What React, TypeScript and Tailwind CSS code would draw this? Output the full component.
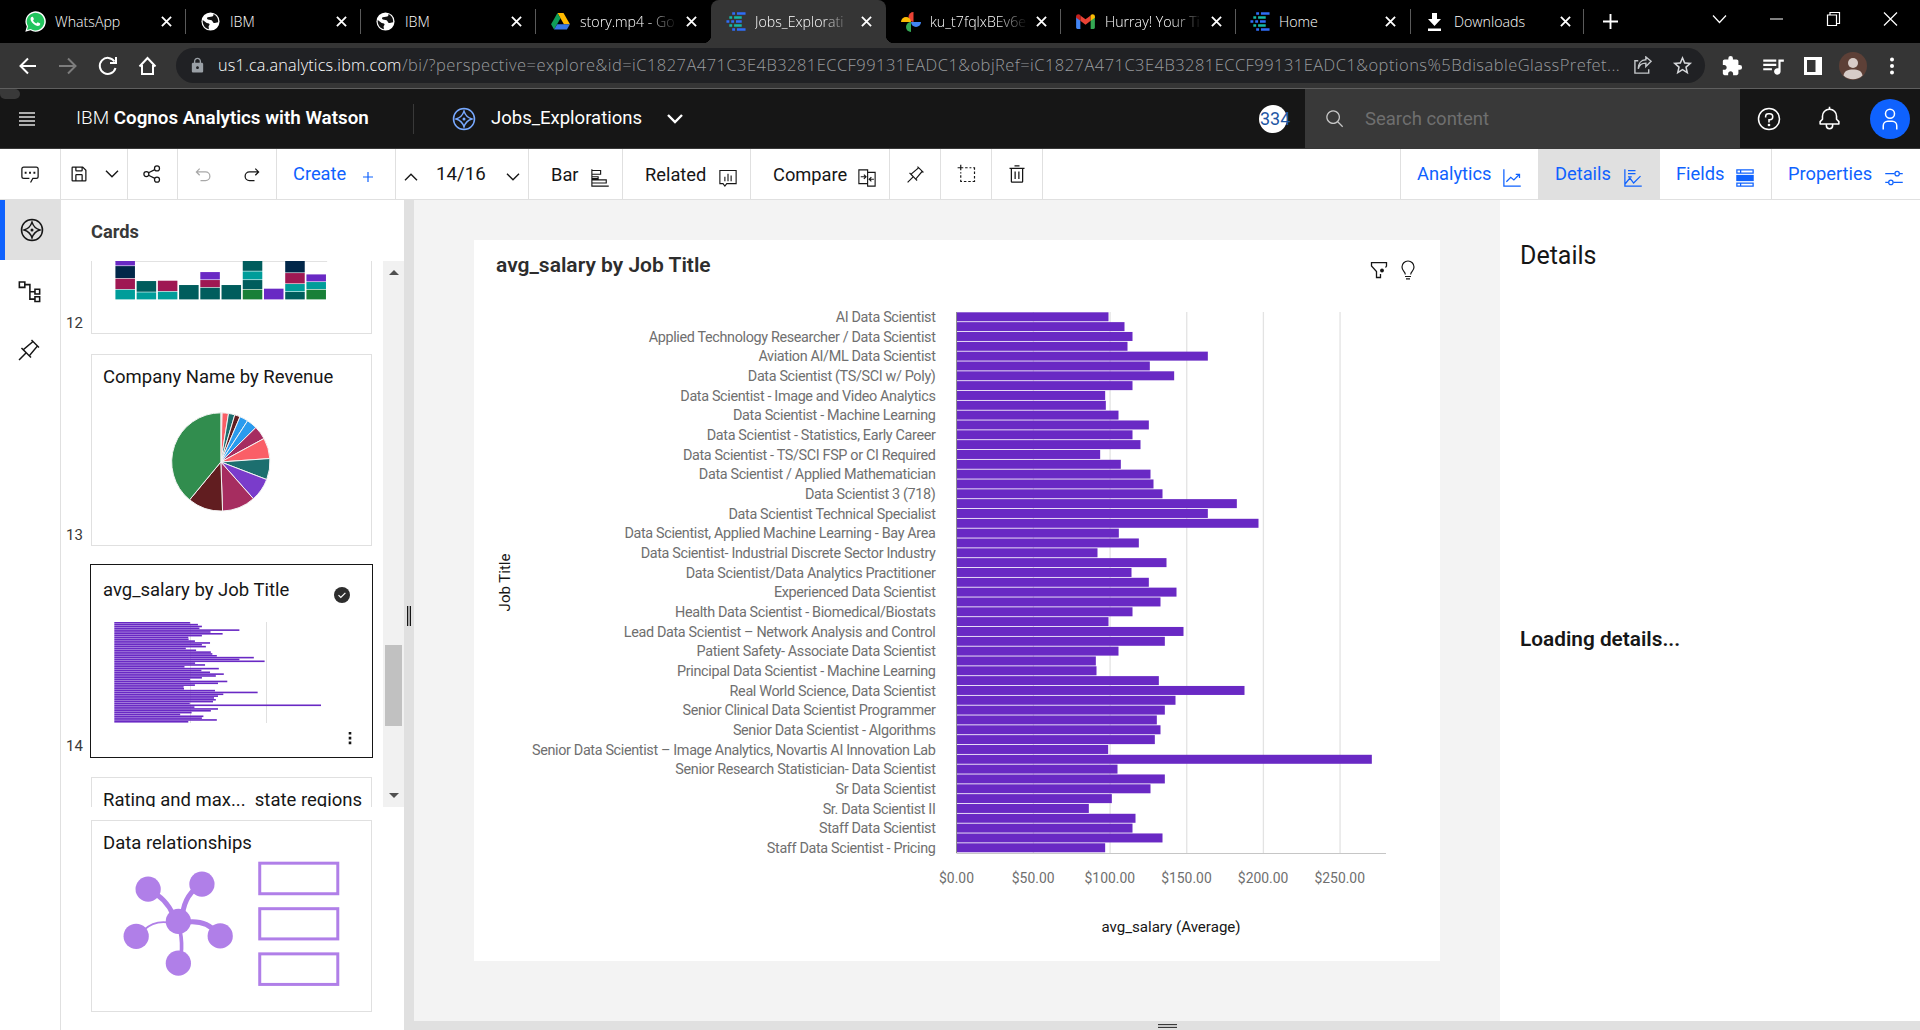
import React from 'react';
import { MdExtension, MdLock, MdQueueMusic, MdStarOutline } from 'react-icons/md';

type IconProps = { className?: string; children: React.ReactNode };

/** Outline icon on a 32-unit grid. */
function Line({ className = '', children }: IconProps) {
  return (
    <svg viewBox="0 0 32 32" fill="none" stroke="currentColor" strokeWidth="2" className={`shrink-0 ${className}`}>
      {children}
    </svg>
  );
}

/** Filled icon on a 32-unit grid. */
function Solid({ className = '', d }: { className?: string; d: string }) {
  return (
    <svg viewBox="0 0 32 32" fill="currentColor" className={`shrink-0 ${className}`}>
      <path d={d} />
    </svg>
  );
}

const PIN =
  'M28.59 13.31 30 11.9 20 2l-1.31 1.42 1.18 1.18-11.49 9.72-1.72-1.71L5.25 14l5.66 5.68L2 28.58 3.41 30l8.91-8.91L18 26.75l1.39-1.42-1.71-1.71 9.72-11.49ZM16.26 22.2 9.8 15.74 21.29 6 26 10.71Z';
const TRASH =
  'M12 12h2v12h-2zM18 12h2v12h-2zM4 6v2h2v20a2 2 0 0 0 2 2h16a2 2 0 0 0 2-2V8h2V6zm4 22V8h16v20zM12 2h8v2h-8z';
const SAVE =
  'm27.71 9.29-5-5A1 1 0 0 0 22 4H6a2 2 0 0 0-2 2v20a2 2 0 0 0 2 2h20a2 2 0 0 0 2-2V10a1 1 0 0 0-.29-.71M12 6h8v4h-8Zm8 20h-8v-8h8Zm2 0v-8a2 2 0 0 0-2-2h-8a2 2 0 0 0-2 2v8H6V6h4v4a2 2 0 0 0 2 2h8a2 2 0 0 0 2-2V6.41l4 4V26Z';
const UNDO =
  'M20 10H7.815l3.587-3.586L10 5 4 11l6 6 1.402-1.415L7.818 12H20a6 6 0 0 1 0 12h-8v2h8a8 8 0 0 0 0-16Z';
const REDO =
  'M12 10h12.185l-3.587-3.586L22 5l6 6-6 6-1.402-1.415L24.182 12H12a6 6 0 0 0 0 12h8v2h-8a8 8 0 0 1 0-16Z';
const CHAT =
  'M17.74 30 16 29l4-7h6a2 2 0 0 0 2-2V8a2 2 0 0 0-2-2H6a2 2 0 0 0-2 2v12a2 2 0 0 0 2 2h9v2H6a4 4 0 0 1-4-4V8a4 4 0 0 1 4-4h20a4 4 0 0 1 4 4v12a4 4 0 0 1-4 4h-4.84ZM7.5 12.5h3v3h-3zM14.5 12.5h3v3h-3zM21.5 12.5h3v3h-3z';
const BELL =
  'M28.7 19.3 26 16.6V13a10 10 0 0 0-9-9.9V1h-2v2.1A10 10 0 0 0 6 13v3.6l-2.7 2.7a1 1 0 0 0-.3.7v3a1 1 0 0 0 1 1h7v1a5 5 0 0 0 10 0v-1h7a1 1 0 0 0 1-1v-3a1 1 0 0 0-.3-.7ZM19 25a3 3 0 0 1-6 0v-1h6Zm8-3H5v-1.6l2.7-2.7A1 1 0 0 0 8 17v-4a8 8 0 0 1 16 0v4a1 1 0 0 0 .3.7l2.7 2.7Z';
const USER =
  'M16 4a5 5 0 1 1-5 5 5 5 0 0 1 5-5m0-2a7 7 0 1 0 7 7 7 7 0 0 0-7-7ZM26 30h-2v-5a5 5 0 0 0-5-5h-6a5 5 0 0 0-5 5v5H6v-5a7 7 0 0 1 7-7h6a7 7 0 0 1 7 7Z';
const SEARCH =
  'm29 27.586-7.552-7.552a11.018 11.018 0 1 0-1.414 1.414L27.586 29ZM4 13a9 9 0 1 1 9 9 9.01 9.01 0 0 1-9-9Z';

function Compass({ className = '' }: { className?: string }) {
  return (
    <Line className={className}>
      <circle cx="16" cy="16" r="14" />
      <path d="M16 5.5Q18.5 13.5 26.5 16Q18.5 18.5 16 26.5Q13.500 18.5 5.500 16Q13.500 13.500 16 5.500Z" />
      <circle cx="16" cy="16" r="1" fill="currentColor" />
    </Line>
  );
}

/* ---------- browser chrome ---------- */

function WhatsAppIcon() {
  return (
    <svg viewBox="0 0 20 20" className="h-[21px] w-[21px]">
      <path d="M.3 19.800 1.700 14.800A9.700 9.700 0 1 1 5.300 18.400Z" fill="#fff" />
      <path d="M1.900 18.200 2.900 14.600A8.400 8.400 0 1 1 5.500 17.200Z" fill="#22c55e" />
      <path
        d="M6.800 5.400c-.5 0-1.500.8-1.500 2.200 0 1.500 1 3 2.400 4.400 1.500 1.400 3.100 2.200 4.500 2.200 1.300 0 2.200-.9 2.300-1.900 0-.4-.1-.5-2.300-1.500-.4-.1-1 1.100-1.400 1.100-.6 0-3.100-2.100-3.100-2.800 0-.3.9-1 .8-1.400-.9-2.200-.9-2.300-1.700-2.300Z"
        fill="#fff"
      />
    </svg>
  );
}

function GlobeIcon() {
  return (
    <svg viewBox="0 0 20 20" className="h-[19px] w-[19px]">
      <circle cx="10" cy="10" r="9.500" fill="#fff" />
      <path d="M1.800 8.500 6 11.500c2 .3 3.200.6 3 2l-1 1.500.3 3.200C4 17.500 1.300 13 1.800 8.500ZM7 5.500c-1.500 1-.5 2.500 1.500 2.700 2.300.2 3.400.6 4 2.300.5 1.200 1.800 1.200 3 .8l2.600-.5C18.300 6.500 16 3.300 13 2.200c.6 1.600-.5 2.800-2.500 2.800Z" fill="#111" />
    </svg>
  );
}

function DriveIcon() {
  return (
    <svg viewBox="0 0 20 18" className="h-[17px] w-[19px]">
      <path d="M6.800 0h6.400l6.800 11.800h-6.400Z" fill="#ffba00" />
      <path d="M6.800 0 10 5.600 3.200 17.500 0 11.900Z" fill="#0f9d58" />
      <path d="M6.500 11.900H20l-3.200 5.600H3.200Z" fill="#3777e3" />
    </svg>
  );
}

function CognosIcon() {
  return (
    <svg viewBox="0 0 20 22" className="h-[21px] w-[20px]" strokeWidth="2.600">
      <g stroke="#2f6df6">
        <path d="M6 2.500h3M11 2.500h9M0 11h3M5 11h3M10 11h6M6 19.500h3M11 19.500h9" />
      </g>
      <g stroke="#14b8a6">
        <path d="M3 6.800h3M8 6.800h8M3 15.200h3M8 15.200h8" />
      </g>
    </svg>
  );
}

function PhotosIcon() {
  return (
    <svg viewBox="0 0 20 22" className="h-[22px] w-[20px]">
      <path d="M10 11V1a5 5 0 0 0 0 10Z" fill="#ea4335" transform="translate(2.500 0)" />
      <path d="M10 11V1a5 5 0 0 1 0 10Z" fill="#4285f4" transform="rotate(90 10 11)" />
      <path d="M10 11V1a5 5 0 0 1 0 10Z" fill="#34a853" transform="rotate(180 10 11)" />
      <path d="M10 11V1a5 5 0 0 1 0 10Z" fill="#fbbc04" transform="rotate(270 10 11)" />
    </svg>
  );
}

function GmailIcon() {
  return (
    <svg viewBox="0 0 20 16" className="h-[15px] w-[19px]">
      <path d="M0 3v11.500C0 15.300.6 16 1.400 16h3.100V6Z" fill="#4285f4" />
      <path d="M20 3v11.500c0 .8-.6 1.500-1.400 1.500h-3.100V6Z" fill="#34a853" />
      <path d="M4.500 1.500 10 5.700l5.500-4.200v5.800L10 11.500 4.500 7.300Z" fill="#ea4335" />
      <path d="M0 2.500C0 .3 2.500-.6 4.500 1v6.300L0 4Z" fill="#c5221f" />
      <path d="M20 2.500c0-2.200-2.500-3.100-4.500-1.500v6.300L20 4Z" fill="#fbbc04" />
    </svg>
  );
}

function DownloadIcon() {
  return (
    <svg viewBox="0 0 13 18" className="h-[18px] w-[13px]" fill="#fff">
      <path d="M4 0h5v6h4l-6.500 7L0 6h4ZM0 15.500h13V18H0Z" />
    </svg>
  );
}

function Cross() {
  return (
    <svg viewBox="0 0 12 12" className="h-[11px] w-[11px] shrink-0" stroke="#fff" strokeWidth="2">
      <path d="M1 1l10 10M11 1L1 11" />
    </svg>
  );
}

const TABS = [
  { icon: <WhatsAppIcon />, title: 'WhatsApp', sep: true },
  { icon: <GlobeIcon />, title: 'IBM', sep: true },
  { icon: <GlobeIcon />, title: 'IBM', sep: true },
  { icon: <DriveIcon />, title: 'story.mp4 - Go', fade: true },
  { icon: <CognosIcon />, title: 'Jobs_Explorati', fade: true, active: true },
  { icon: <PhotosIcon />, title: 'ku_t7fqlxBEv6e', fade: true, sep: true },
  { icon: <GmailIcon />, title: 'Hurray! Your Ti', fade: true, sep: true },
  { icon: <CognosIcon />, title: 'Home', sep: true },
  { icon: <DownloadIcon />, title: 'Downloads', sep: true },
];

function TabStrip() {
  return (
    <div className="flex h-[43px] bg-black pl-[11px] font-['Open_Sans',sans-serif] text-[14.2px] text-white">
      {TABS.map((t, i) => (
        <div
          key={i}
          className={`relative flex shrink-0 items-center pl-[14px] ${i > 7 ? 'w-[173px]' : 'w-[175px]'} ${
            t.active ? 'rounded-t-lg bg-[#353535]' : ''
          }`}
        >
          {t.active && (
            <>
              <span className="absolute -left-2 bottom-0 size-2 bg-[radial-gradient(circle_at_0_0,black_8px,#353535_8.500px)]" />
              <span className="absolute -right-2 bottom-0 size-2 bg-[radial-gradient(circle_at_100%_0,black_8px,#353535_8.500px)]" />
            </>
          )}
          <span className={`flex w-[21px] justify-center ${i > 6 ? '-ml-px' : ''}`}>{t.icon}</span>
          <span
            className={`ml-[9px] w-[104px] whitespace-nowrap font-light ${
              t.fade ? '[mask-image:linear-gradient(to_right,black_64%,transparent_94%)]' : ''
            }`}
          >
            {t.title}
          </span>
          <span className="ml-[2px]">
            <Cross />
          </span>
          {t.sep && <span className="absolute right-0 top-[9px] h-[25px] w-px bg-[#5a5a5a]" />}
        </div>
      ))}
      <div className="flex w-[53px] items-center justify-center">
        <svg viewBox="0 0 16 16" className="h-[15px] w-[15px]" stroke="#fff" strokeWidth="2">
          <path d="M8 0v16M0 8h16" />
        </svg>
      </div>
      <div className="ml-auto flex h-[37px] items-center pr-[22px]">
        <svg viewBox="0 0 186 16" className="h-4 w-[186px]" fill="none" stroke="#fff" strokeWidth="1.200">
          <path d="M1 4.500l6.500 7L14 4.500M58 8h13M172 1.500l13 13M185 1.500l-13 13" />
          <path d="M115.500 4h9v10.500h-9zM118 4V1.500h9.500v11H124.500" />
        </svg>
      </div>
    </div>
  );
}

function AddressBar() {
  return (
    <div className="flex h-[46px] items-center border-b border-[#5f5f5f] bg-[#353535] font-['Open_Sans',sans-serif] text-white">
      <svg viewBox="0 0 176 30" className="h-[30px] w-[176px] shrink-0" fill="none" stroke="#fff" strokeWidth="2">
        <path d="M36 15H21M28 7.500 20.500 15l7.500 7.500" />
        <path d="M59 15h15M68 7.500l7.500 7.500-7.500 7.500" stroke="#7d7d7d" />
        <path d="M114.500 10.500A8 8 0 1 0 115.500 17M116 6v6h-6" />
        <path d="M142 14v9h11v-9M139.500 15.500l8-8.500 8 8.500" />
      </svg>
      <div className="flex h-[35px] w-[1529px] items-center rounded-full bg-[#202124] pl-[13px] font-light">
        <MdLock className="size-[17px] shrink-0 text-[#9aa0a6]" />
        <span className="ml-[12px] w-[184px] shrink-0 whitespace-nowrap text-[16.200px] tracking-[0.180px]">us1.ca.analytics.ibm.com</span>
        <span className="w-[1216px] shrink-0 whitespace-nowrap text-[16.500px] tracking-[0.450px] text-[#9a9c9f]">
          /bi/?perspective=explore&amp;id=iC1827A471C3E4B3281ECCF99131EADC1&amp;objRef=iC1827A471C3E4B3281ECCF99131EADC1&amp;options%5BdisableGlassPrefet...
        </span>
        <svg viewBox="0 0 20 20" className="ml-[15px] h-[19px] w-[20px] shrink-0" fill="none" stroke="#c4c7ca" strokeWidth="1.500">
          <path d="M5 5H1.500v13H16v-4M5 13.500C6 9 9 7.500 13 7.500V11l5.500-5.500L13 1v3C8 4 5 8 5 13.500Z" />
        </svg>
        <MdStarOutline className="ml-[18px] size-[23px] text-[#d5d7da]" />
      </div>
      <div className="flex flex-1 items-center justify-between pl-[16px] pr-[20px]">
        <MdExtension className="size-[22px]" />
        <MdQueueMusic className="size-[26px]" />
        <svg viewBox="0 0 18 18" className="size-[18px]" fill="none" stroke="#fff">
          <path d="M1.500 1.500h15v15h-15z" strokeWidth="3" />
          <path d="M14 2v14" strokeWidth="5" />
        </svg>
        <svg viewBox="0 0 28 28" className="size-[28px]">
          <circle cx="14" cy="14" r="14" fill="#5d4037" />
          <circle cx="14" cy="11" r="5" fill="#d7ccc8" />
          <path d="M4.500 23.500C5 19 9 17.500 14 17.500s9 1.500 9.500 6a14 14 0 0 1-19 0Z" fill="#d7ccc8" />
        </svg>
        <svg viewBox="0 0 16 18" className="h-[18px] w-4" fill="#fff">
          <circle cx="8" cy="2.500" r="2" />
          <circle cx="8" cy="9" r="2" />
          <circle cx="8" cy="15.500" r="2" />
        </svg>
      </div>
    </div>
  );
}

/* ---------- application header and toolbar ---------- */

function AppHeader() {
  return (
    <header className="relative flex h-[60px] items-center border-b border-[#393939] bg-[#161616] text-[18.500px] text-white">
      <span className="absolute left-0 top-0 h-[10px] w-[20px] rounded-md rounded-tl-none bg-[#393939]" />
      <svg viewBox="0 0 16 14" className="ml-[19px] h-[14px] w-4 shrink-0" stroke="#e0e0e0" strokeWidth="1.300">
        <path d="M0 1h16M0 5h16M0 9h16M0 13h16" />
      </svg>
      <div className="ml-[41px] w-[337px] whitespace-nowrap">
        <span className="text-[19px] font-light">IBM</span>{' '}
        <span className="text-[18.800px] font-semibold">Cognos Analytics with Watson</span>
      </div>
      <span className="h-[30px] w-px bg-[#393939]" />
      <Compass className="ml-[38px] size-[24px] text-[#78a9ff]" />
      <span className="ml-[15px] w-[152px]">Jobs_Explorations</span>
      <svg viewBox="0 0 16 10" className="ml-[24px] h-[10px] w-4" fill="none" stroke="#fff" strokeWidth="2.400">
        <path d="M1 1l7 7 7-7" />
      </svg>
      <div className="ml-auto flex h-full items-center">
        <span className="mr-[18px] flex size-[28px] items-center rounded-full bg-white text-[18px] text-[#1f57a4]">
          <span className="ml-[1px]">334</span>
        </span>
        <div className="flex h-full w-[435px] items-center bg-[#393939] pl-[20px] text-[#6f6f6f]">
          <Solid d={SEARCH} className="size-[20px] text-[#c6c6c6]" />
          <span className="ml-5 pt-0.5">Search content</span>
        </div>
        <Line className="ml-[17px] size-[24px]">
          <circle cx="16" cy="16" r="14" />
          <path d="M11.500 14v-1.500A3.500 3.500 0 0 1 15 9h2a4 4 0 0 1 0 8h-1v3.500" />
          <circle cx="16" cy="24" r=".8" fill="currentColor" />
        </Line>
        <Solid d={BELL} className="ml-[36px] size-[25px]" />
        <span className="ml-[28px] mr-[10px] flex size-[40px] items-center justify-center rounded-full bg-[#0f62fe]">
          <Solid d={USER} className="size-[24px]" />
        </span>
      </div>
    </header>
  );
}

function Cell({ className, children }: { className: string; children: React.ReactNode }) {
  return <div className={`flex h-full shrink-0 items-center border-r border-[#e0e0e0] ${className}`}>{children}</div>;
}

const Chevron = ({ className = '', up = false }: { className?: string; up?: boolean }) => (
  <svg viewBox="0 0 14 8" className={`h-[8px] w-[14px] shrink-0 ${className}`} fill="none" stroke="currentColor" strokeWidth="1.400">
    <path d={up ? 'M1 7.200l6-6 6 6' : 'M1 .800l6 6 6-6'} />
  </svg>
);

function Toolbar() {
  return (
    <div className="flex h-[51px] items-center border-b border-[#e0e0e0] bg-white text-[18.300px] text-[#161616]">
      <Cell className="w-[61px] justify-center">
        <Solid d={CHAT} className="size-[20px]" />
      </Cell>
      <Cell className="w-[67px] justify-between pl-[8px] pr-[8px]">
        <Solid d={SAVE} className="size-[20px]" />
        <Chevron />
      </Cell>
      <Cell className="w-[50px] justify-center pr-px">
        <Line className="size-[20px]">
          <circle cx="24" cy="7" r="4" />
          <circle cx="7" cy="16" r="4" />
          <circle cx="24" cy="25" r="4" />
          <path d="M10.500 14 20.500 9M10.500 18l10 5" />
        </Line>
      </Cell>
      <Cell className="w-[99px] justify-between pl-[15px] pr-[14px] pt-0.5">
        <Solid d={UNDO} className="size-[20px] text-[#a8a8a8]" />
        <Solid d={REDO} className="size-[20px]" />
      </Cell>
      <Cell className="w-[119px] pl-[16px] text-[#0f62fe]">
        <span>Create</span>
        <svg viewBox="0 0 10 10" className="ml-[17px] mt-[6px] size-[10px]" stroke="currentColor" strokeWidth="1.200">
          <path d="M5 0v10M0 5h10" />
        </svg>
      </Cell>
      <Cell className="w-[133px] pl-[8px]">
        <Chevron up className="mt-[6px]" />
        <span className="ml-[18px] text-[18.700px]">14/16</span>
        <Chevron className="ml-[20px] mt-[6px]" />
      </Cell>
      <Cell className="w-[94px] pl-[22px] pt-0.5">
        <span>Bar</span>
        <Line className="ml-[11px] mt-[5px] size-[20px]">
          <path d="M3 2v27h27M3 4h14v6H3M3 14h10v3H3M3 19h23v5H3" strokeWidth="1.800" />
        </Line>
      </Cell>
      <Cell className="w-[128px] pl-[22px] pt-0.5">
        <span>Related</span>
        <Line className="ml-[12px] mt-[5px] size-[20px]">
          <path d="M3 4h26v21H14l-3 4-3-4H3zM11 21v-7M16 21V9M21 21v-9" strokeWidth="1.800" />
        </Line>
      </Cell>
      <Cell className="w-[139px] pl-[22px] pt-0.5">
        <span>Compare</span>
        <Line className="ml-[10px] mt-[5px] size-[20px]">
          <path d="M17 25H3V3h14v26h12V7H17M6 14h8M11 10.500l3.500 3.500-3.500 3.500M27 18h-7M23 14.500 19.500 18l3.500 3.500" strokeWidth="1.800" />
        </Line>
      </Cell>
      <Cell className="w-[51px] justify-center">
        <Solid d={PIN} className="size-[19px]" />
      </Cell>
      <Cell className="w-[51px] justify-center pl-px">
        <Line className="size-[20px]">
          <path d="M6 1v9M1 6h9M13 6h4M20 6h3M26 6h2v3M28 12v4M28 19v4M28 26v2h-3M22 28h-4M15 28h-4M8 28H6v-3M6 22v-4M6 15v-2" strokeWidth="1.900" />
        </Line>
      </Cell>
      <Cell className="w-[51px] justify-center">
        <Solid d={TRASH} className="size-[20px]" />
      </Cell>
      <div className="ml-auto flex h-full text-[#0f62fe]">
        <div className="flex w-[138px] items-center border-l border-[#e0e0e0] pl-[16px]">
          <span className="w-[75px]">Analytics</span>
          <Line className="ml-[10px] mt-[7px] size-[20px]">
            <path d="M3 2v27h27M7 22l7-7 5 4 9-9M22 10h6v6" />
          </Line>
        </div>
        <div className="flex w-[122px] items-center bg-[#e0e0e0] pl-[17px]">
          <span className="w-[58px]">Details</span>
          <Line className="ml-[10px] mt-[7px] size-[20px]">
            <path d="M3 2v27h27M3 26l8-10 6 8 11-11M8 4h12M8 9h12M8 14h6" />
          </Line>
        </div>
        <div className="flex w-[112px] items-center border-r border-[#e0e0e0] pl-[16px]">
          <span className="w-[49px]">Fields</span>
          <Line className="ml-[10px] mt-[7px] size-[20px]">
            <path d="M3 3h26v5H3zM3 24h26v5H3zM9 3v5M9 24v5" />
            <path d="M2 11h28v10H2z" fill="currentColor" stroke="none" />
          </Line>
        </div>
        <div className="flex w-[148px] items-center pl-[16px]">
          <span className="w-[86px]">Properties</span>
          <Line className="ml-[10px] mt-[7px] size-[20px]">
            <circle cx="21" cy="9" r="3.500" />
            <circle cx="11" cy="23" r="3.500" />
            <path d="M2 9h15M25 9h5M2 23h5M15 23h15" />
          </Line>
        </div>
      </div>
    </div>
  );
}

/* ---------- data ---------- */

/* Average salary in chart units, one entry for each job title. */
const SALARY = [
  456, 504, 528, 513, 754, 580, 653, 528, 446, 448, 486, 577, 528, 552, 431, 493, 582, 591, 618, 841, 754, 906, 487, 547,
  423, 630, 525, 577, 660, 612, 528, 456, 681, 625, 486, 418, 420, 607, 864, 657, 625, 601, 612, 595, 455, 1246, 483,
  625, 582, 466, 397, 537, 528, 618, 446,
];

const JOBS = [
  'AI Data Scientist',
  'Applied Technology Researcher / Data Scientist',
  'Aviation AI/ML Data Scientist',
  'Data Scientist (TS/SCI w/ Poly)',
  'Data Scientist - Image and Video Analytics',
  'Data Scientist - Machine Learning',
  'Data Scientist - Statistics, Early Career',
  'Data Scientist - TS/SCI FSP or CI Required',
  'Data Scientist / Applied Mathematician',
  'Data Scientist 3 (718)',
  'Data Scientist Technical Specialist',
  'Data Scientist, Applied Machine Learning - Bay Area',
  'Data Scientist- Industrial Discrete Sector Industry',
  'Data Scientist/Data Analytics Practitioner',
  'Experienced Data Scientist',
  'Health Data Scientist - Biomedical/Biostats',
  'Lead Data Scientist – Network Analysis and Control',
  'Patient Safety- Associate Data Scientist',
  'Principal Data Scientist - Machine Learning',
  'Real World Science, Data Scientist',
  'Senior Clinical Data Scientist Programmer',
  'Senior Data Scientist - Algorithms',
  'Senior Data Scientist – Image Analytics, Novartis AI Innovation Lab',
  'Senior Research Statistician- Data Scientist',
  'Sr Data Scientist',
  'Sr. Data Scientist II',
  'Staff Data Scientist',
  'Staff Data Scientist - Pricing',
];

const G = '#198038';
const D = '#005d5d';
const T = '#009d9a';
const M = '#9f1853';
const N = '#012749';
const P = '#6929c4';

/* Each column lists its segments from the baseline upwards. */
const STACKS: [string, number][][] = [
  [[T, 31], [M, 33], [N, 38], [P, 30]],
  [[T, 23], [D, 34]],
  [[T, 25], [M, 33]],
  [[D, 45]],
  [[D, 37], [M, 23], [P, 24]],
  [[D, 45]],
  [[G, 31], [D, 29], [T, 26], [D, 50]],
  [[P, 34]],
  [[D, 24], [T, 24], [M, 33], [N, 40]],
  [[G, 31], [T, 23], [P, 23]],
];

const SLICES: [number, string][] = [
  [1.5, '#d3bdf0'],
  [9, '#fa5f67'],
  [16.5, '#1c6f6f'],
  [23, '#611d20'],
  [33, '#2a9bee'],
  [45.5, '#2a9bee'],
  [61.5, '#a62d60'],
  [86, '#fa5f67'],
  [111, '#1c6f6f'],
  [138.5, '#7a3ccb'],
  [178, '#a62d60'],
  [219.5, '#611d20'],
  [360, '#318d4e'],
];

/* ---------- cards panel ---------- */

function StackedColumns() {
  return (
    <svg viewBox="0 0 280 190" className="h-full w-full">
      <path d="M23 118.500h213" stroke="#e0e0e0" />
      {STACKS.map((col, i) => {
        let y = 157;
        return col.map(([fill, h], j) => {
          y -= h / 3;
          return <rect key={`${i}-${j}`} x={23.5 + 21.3 * i} y={y + 0.2} width="19.600" height={h / 3 - 0.6} fill={fill} />;
        });
      })}
    </svg>
  );
}

function Pie() {
  const cx = 129.3;
  const cy = 107;
  const r = 49.3;
  const at = (deg: number) => {
    const a = ((deg - 90) * Math.PI) / 180;
    return `${cx + r * Math.cos(a)} ${cy + r * Math.sin(a)}`;
  };
  return (
    <svg viewBox="0 0 280 190" className="h-full w-full">
      {SLICES.map(([end, fill], i) => {
        const start = i ? SLICES[i - 1][0] : 0;
        return (
          <path
            key={i}
            d={`M${cx} ${cy}L${at(start)}A${r} ${r} 0 ${end - start > 180 ? 1 : 0} 1 ${at(end)}Z`}
            fill={fill}
            stroke="#f4f4f4"
            strokeWidth="1"
          />
        );
      })}
    </svg>
  );
}

function MiniBars() {
  return (
    <svg viewBox="0 0 281 192" className="h-full w-full">
      <path d="M99.500 57v101M175.500 57v101" stroke="#e0e0e0" />
      {SALARY.map((v, i) => (
        <rect key={i} x="23.300" y={57 + i * 1.833} width={v * 0.1659} height="1.600" fill="#6929c4" />
      ))}
    </svg>
  );
}

function Relationships() {
  return (
    <svg viewBox="275 812 840 570" className="h-full w-full" fill="none" stroke="#b07fe8">
      <path d="M444 1016Q500 1045 520 1095M606 1000Q555 1030 548 1090M560 1115Q620 1108 650 1148" strokeWidth="15" />
      <path d="M540 1140Q548 1180 543 1215" strokeWidth="11" />
      <path d="M430 1140Q460 1112 500 1116" strokeWidth="5" />
      <g fill="#b07fe8" stroke="none">
        <circle cx="444" cy="1016" r="38" />
        <circle cx="606" cy="1001" r="38" />
        <circle cx="535" cy="1113" r="38" />
        <circle cx="408" cy="1158" r="38" />
        <circle cx="661" cy="1157" r="38" />
        <circle cx="535" cy="1239" r="38" />
      </g>
      <g strokeWidth="9">
        <rect x="780" y="938" width="235" height="92" />
        <rect x="780" y="1075" width="235" height="91" />
        <rect x="780" y="1211" width="235" height="92" />
      </g>
    </svg>
  );
}

function Card({ n, title, selected = false, children }: { n?: number; title: React.ReactNode; selected?: boolean; children?: React.ReactNode }) {
  return (
    <div className={`flex shrink-0 items-end pl-[5px] ${selected ? '-my-px' : ''}`}>
      <span className={`w-[25px] shrink-0 text-[15px] leading-5 text-[#393939] ${selected ? 'pb-[2px]' : 'pb-px'}`}>{n}</span>
      <div
        className={`relative ${
          selected ? 'h-[194px] w-[283px] -ml-px border border-[#161616]' : 'h-[192px] w-[281px] border border-[#e0e0e0]'
        }`}
      >
        <div className="h-full w-full">{children}</div>
        <div
          className={`absolute whitespace-pre text-[18.500px] leading-6 ${selected ? 'left-3 top-[13px]' : 'left-[11px] top-[10px]'}`}
        >
          {title}
        </div>
        {selected && (
          <>
            <svg viewBox="0 0 16 16" className="absolute right-[22px] top-[22px] size-4">
              <circle cx="8" cy="8" r="8" fill="#2d2d2d" />
              <path d="M4.500 8.200l2.300 2.300 4.600-4.700" fill="none" stroke="#fff" strokeWidth="1.200" />
            </svg>
            <svg viewBox="0 0 4 14" className="absolute bottom-[12px] right-[20px] h-[14px] w-1" fill="#161616">
              <path d="M.700 1h2.600v2.600H.700zM.700 5.800h2.600v2.600H.700zM.700 10.600h2.600v2.600H.700z" />
            </svg>
          </>
        )}
      </div>
    </div>
  );
}

function CardsPanel() {
  return (
    <section className="flex w-[343px] shrink-0 flex-col bg-white">
      <h2 className="flex h-[61px] shrink-0 items-center pl-[30px] pt-0.5 text-[18.300px] font-bold text-[#393939]">Cards</h2>
      <div className="flex h-[546px] shrink-0 justify-between overflow-hidden">
        <div className="-mt-[119px] flex flex-col gap-[19.600px]">
          <Card n={12} title="">
            <StackedColumns />
          </Card>
          <Card n={13} title="Company Name by Revenue">
            <Pie />
          </Card>
          <Card n={14} title="avg_salary by Job Title" selected>
            <MiniBars />
          </Card>
          <Card title={'Rating and max...  state regions'} />
        </div>
        <div className="flex w-[21px] flex-col items-center bg-[#f1f1f1] py-[9px]">
          <svg viewBox="0 0 10 5" className="h-[5px] w-[10px]" fill="#505050">
            <path d="M5 0l5 5H0z" />
          </svg>
          <span className="mt-[370px] h-[81px] w-[17px] bg-[#c1c1c1]" />
          <svg viewBox="0 0 10 5" className="mt-auto h-[5px] w-[10px]" fill="#505050">
            <path d="M5 5L0 0h10z" />
          </svg>
        </div>
      </div>
      <div className="mt-[13px]">
        <Card title="Data relationships">
          <Relationships />
        </Card>
      </div>
    </section>
  );
}

function SideRail() {
  return (
    <nav className="flex w-[61px] shrink-0 flex-col border-r border-[#e0e0e0] bg-white text-[#161616]">
      <div className="flex h-[60px] items-center justify-center border-l-[5px] border-[#0f62fe] bg-[#e0e0e0] pr-px">
        <Compass className="size-[24px]" />
      </div>
      <div className="flex h-[60px] items-center justify-center pr-px">
        <Line className="size-[25px]">
          <path d="M3 5h7v7H3zM23 14.500h6v6h-6zM23 24h6v6h-6zM10 8.500h6.500V27H23M16.500 17.500H23" strokeWidth="2" />
        </Line>
      </div>
      <div className="flex h-[60px] items-center justify-center pr-[2px]">
        <Solid d={PIN} className="size-[24px]" />
      </div>
    </nav>
  );
}

/* ---------- main chart ---------- */

function SalaryChart() {
  /* The user units equal page pixels inside the sheet. */
  const x0 = 482.5;
  const top = 72;
  const row = 9.833;
  return (
    <svg viewBox="0 0 966 721" className="h-[721px] w-[966px] font-['Roboto',sans-serif]">
      {[0, 1, 2, 3, 4, 5].map((k) => (
        <g key={k}>
          {k > 0 && <path d={`M${x0 + 76.65 * k + 0.3} ${top}v541`} stroke="#e3e3e3" strokeWidth="1.300" />}
          <text x={x0 + 76.65 * k} y="643" textAnchor="middle" fontSize="13.900" fill="#6f6f6f">
            {`$${k * 50}.00`}
          </text>
        </g>
      ))}
      {SALARY.map((v, i) => (
        <rect key={i} x={x0} y={top + i * row + 0.3} width={v / 3} height="9" fill="#6929c4" />
      ))}
      <path d={`M${x0} ${top}v541`} stroke="#8d8d8d" />
      <path d={`M${x0} 613.500h429.500`} stroke="#c6c6c6" />
      {JOBS.map((t, i) => (
        <text key={t} x="461.500" y={82 + i * row * 2} textAnchor="end" fontSize="14.400" letterSpacing="-0.350" fill="#6f6f6f">
          {t}
        </text>
      ))}
      <text x="697" y="692" textAnchor="middle" fontSize="15.100" fill="#161616">
        avg_salary (Average)
      </text>
      <text transform="translate(36 342.500) rotate(-90)" textAnchor="middle" fontSize="15" fill="#161616">
        Job Title
      </text>
    </svg>
  );
}

function Sheet() {
  return (
    <div className="relative h-[721px] w-[966px] bg-white">
      <SalaryChart />
      <div className="absolute inset-x-0 top-0 flex h-[52px] items-center justify-between pl-[22px] pr-[24px]">
        <h1 className="text-[21px] font-semibold text-[#2d2d2d]">avg_salary by Job Title</h1>
        <div className="flex items-center gap-[12px] pt-[8px] text-[#161616]">
          <svg viewBox="0 0 18 18" className="size-[18px]" fill="none" stroke="currentColor" strokeWidth="1.300">
            <path d="M15.500 6.500 16.500 5V1.600h-15V5l5 5.500V16.500h4V13" />
            <circle cx="12" cy="9.500" r="1.900" fill="currentColor" stroke="none" />
          </svg>
          <svg viewBox="0 0 16 20" className="h-[20px] w-4" fill="none" stroke="currentColor" strokeWidth="1.200">
            <path d="M5.300 14.500C5.300 11.500 2 11 2 7a6 6 0 0 1 12 0c0 4-3.300 4.500-3.300 7.500M5 16.500h6M6 18.800h4" />
          </svg>
        </div>
      </div>
    </div>
  );
}

export default function App() {
  return (
    <div className="flex h-[1030px] w-[1920px] flex-col overflow-hidden bg-white font-['Roboto',sans-serif] text-[#161616]">
      <TabStrip />
      <AddressBar />
      <AppHeader />
      <Toolbar />
      <div className="flex min-h-0 flex-1">
        <SideRail />
        <CardsPanel />
        <div className="flex w-[10px] shrink-0 justify-center bg-[#e0e0e0] pt-[406px]">
          <span className="h-[20px] w-1 border-x border-[#161616] bg-[#a8a8a8]" />
        </div>
        <div className="flex flex-1 flex-col">
          <div className="flex min-h-0 flex-1">
            <main className="w-[1086px] bg-[#f3f3f3] pl-[60px] pt-[40px]">
              <Sheet />
            </main>
            <aside className="flex-1 bg-white pl-[20px]">
              <h2 className="pt-[40px] text-[25px] leading-[32px]">Details</h2>
              <p className="mt-[355px] text-[20.800px] font-semibold leading-6">Loading details...</p>
            </aside>
          </div>
          <div className="flex h-[9px] items-center justify-center bg-[#e0e0e0]">
            <span className="h-1 w-[19px] border-y border-[#393939] bg-[#c6c6c6]" />
          </div>
        </div>
      </div>
    </div>
  );
}
